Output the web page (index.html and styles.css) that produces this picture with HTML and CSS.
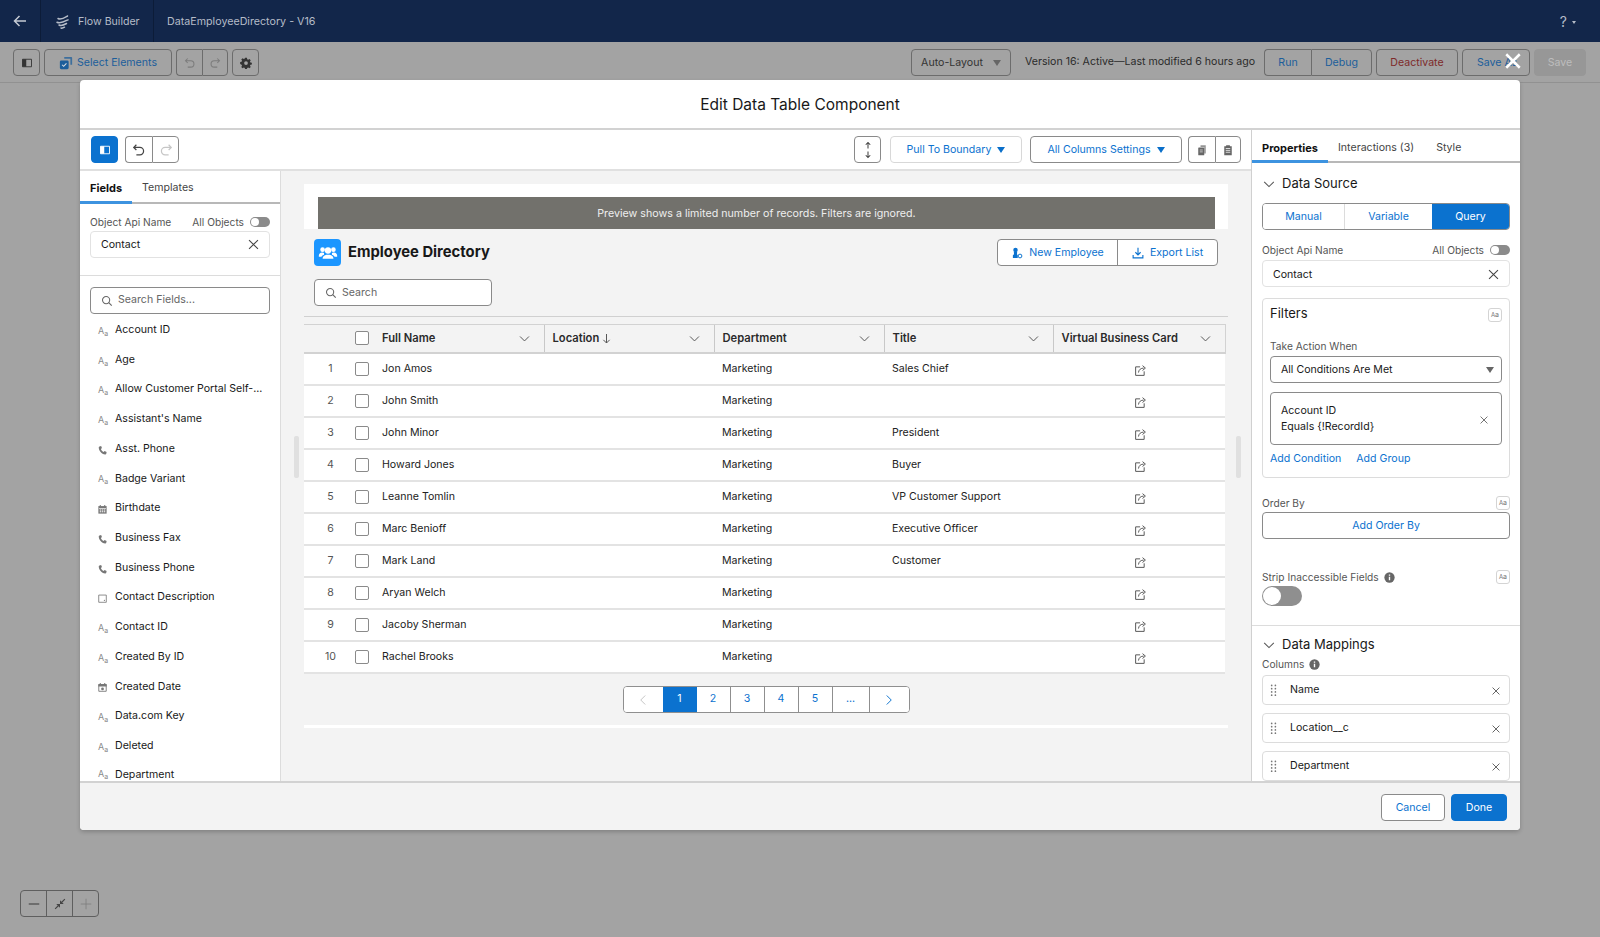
FILE: index.html
```html
<!DOCTYPE html>
<html lang="en">
<head>
<meta charset="utf-8">
<title>Flow Builder</title>
<link rel="stylesheet" href="styles.css">
</head>
<body>
<svg class="sprite" xmlns="http://www.w3.org/2000/svg">
  <symbol id="i-back" viewBox="0 0 16 16"><path d="M14 8H2.500M7.500 3 2.500 8l5 5" fill="none" stroke="currentColor" stroke-width="1.500"/></symbol>
  <symbol id="i-flow" viewBox="0 0 16 16"><path d="M3 4.500c3 1.600 6-.4 9.500-2.500M2 8.200c3.500 1.600 7-.4 11-2.400M4 11c2.500 1.200 5 0 7.500-1.500M6 14c1.200.4 2.200 0 3.500-.8" fill="none" stroke="currentColor" stroke-width="1.500" stroke-linecap="round"/></symbol>
  <symbol id="i-panel" viewBox="0 0 16 16"><path d="M2 3h12v10H2z" fill="none" stroke="currentColor" stroke-width="1.200"/><path d="M2 3h5v10H2z" fill="currentColor"/></symbol>
  <symbol id="i-select" viewBox="0 0 16 16"><path d="M6 1h8a1 1 0 0 1 1 1v8h-2V3H6z" fill="currentColor" opacity=".75"/><rect x="1" y="5" width="10" height="10" rx="1.500" fill="currentColor"/><path d="m3.500 10 1.800 1.800 3.200-3.400" fill="none" stroke="#d6dbe0" stroke-width="1.200"/></symbol>
  <symbol id="i-undo" viewBox="0 0 16 16"><path d="M5 2 2 5l3 3M2.500 5H9a4 4 0 0 1 0 8.500H5" fill="none" stroke="currentColor" stroke-width="1.400"/></symbol>
  <symbol id="i-redo" viewBox="0 0 16 16"><path d="m11 2 3 3-3 3M13.500 5H7a4 4 0 0 0 0 8.500h4" fill="none" stroke="currentColor" stroke-width="1.400"/></symbol>
  <symbol id="i-gear" viewBox="0 0 16 16"><path d="M6.800 1h2.400l.4 1.900 1.300.6 1.700-1 1.700 1.700-1 1.700.6 1.300 1.900.4v2.400l-1.900.4-.6 1.300 1 1.700-1.700 1.700-1.700-1-1.300.6-.4 1.900H6.800l-.4-1.900-1.300-.6-1.700 1-1.700-1.700 1-1.700-.6-1.300L.2 9.200V6.800l1.900-.4.6-1.300-1-1.700 1.700-1.700 1.700 1 1.300-.6z" fill="currentColor"/><circle cx="8" cy="8" r="2.500" fill="#a3a3a3"/></symbol>
  <symbol id="i-chev" viewBox="0 0 16 16"><path d="m2.500 5.500 5.500 5.500 5.500-5.500" fill="none" stroke="currentColor" stroke-width="1.200"/></symbol>
  <symbol id="i-x" viewBox="0 0 16 16"><path d="m2.500 2.500 11 11m0-11-11 11" fill="none" stroke="currentColor" stroke-width="1.300"/></symbol>
  <symbol id="i-close" viewBox="0 0 16 16"><path d="m2 2 12 12m0-12L2 14" fill="none" stroke="currentColor" stroke-width="2.200"/></symbol>
  <symbol id="i-search" viewBox="0 0 16 16"><circle cx="6.800" cy="6.800" r="4.800" fill="none" stroke="currentColor" stroke-width="1.400"/><path d="m10.300 10.300 4 4" stroke="currentColor" stroke-width="1.500"/></symbol>
  <symbol id="i-phone" viewBox="0 0 16 16"><path d="M3.500 2 6 1.500l1.200 3-1.500 1.200c.6 1.800 2 3.400 4 4.500l1.300-1.300 3 1.300-.6 2.800c-.2.500-.8.800-1.500.7C6.500 13 2.800 8.500 2.500 3.500c0-.7.400-1.300 1-1.500z" fill="currentColor"/></symbol>
  <symbol id="i-date" viewBox="0 0 16 16"><path d="M2 3h12v11H2z" fill="currentColor"/><path d="M4 1.500h1.500V4H4zm6.500 0H12V4h-1.500z" fill="currentColor"/><path d="M3 6h10v1H3z" fill="#fff"/><path d="M4 8h2v1.500H4zm3 0h2v1.500H7zm3 0h2v1.500h-2zm-6 2.500h2V12H4zm3 0h2V12H7zm3 0h2V12h-2z" fill="#fff"/></symbol>
  <symbol id="i-datetime" viewBox="0 0 16 16"><path d="M2.600 4h10.800v9.500H2.600z" fill="none" stroke="currentColor" stroke-width="1.300"/><path d="M2 3h12v3.500H2zM4 1.500h1.500V4H4zm6.500 0H12V4h-1.500z" fill="currentColor"/><circle cx="8" cy="10" r="2" fill="currentColor"/></symbol>
  <symbol id="i-area" viewBox="0 0 16 16"><path d="M2.500 3h11v10.500h-11z" fill="none" stroke="currentColor" stroke-width="1.200"/><path d="m9.500 11.500 2-2v2z" fill="currentColor"/></symbol>
  <symbol id="i-share" viewBox="0 0 16 16"><path d="M7.500 3.500H2v10.500h10.500V9" fill="none" stroke="currentColor" stroke-width="1.200"/><path d="M5.500 10.500c.4-3.500 3-5.500 6.500-5.500M10.500 2 14 5l-3.500 3" fill="none" stroke="currentColor" stroke-width="1.200"/></symbol>
  <symbol id="i-group" viewBox="0 0 24 24"><circle cx="12" cy="9" r="3.800" fill="currentColor"/><path d="M5.500 19c0-3.500 2.500-5 6.500-5s6.500 1.500 6.500 5z" fill="currentColor"/><circle cx="5.500" cy="8" r="2.800" fill="currentColor"/><circle cx="18.500" cy="8" r="2.800" fill="currentColor"/><path d="M1 15.500c0-2.500 1.500-4 4-4 1 0 1.800.2 2.400.6-.3 1-.4 1.500 0 2-1.500.5-2.800 1.200-3.200 2.400H1zm22 0c0-2.500-1.500-4-4-4-1 0-1.800.2-2.400.6.300 1 .4 1.500 0 2 1.500.5 2.800 1.200 3.200 2.400H23z" fill="currentColor"/></symbol>
  <symbol id="i-person" viewBox="0 0 16 16"><circle cx="6" cy="4" r="3" fill="currentColor"/><path d="M3.800 6.500h4.400L8 9.500l1 1.500v3.500H2.500V11l1.500-1.500z" fill="currentColor"/><circle cx="12" cy="12" r="2.500" fill="none" stroke="currentColor" stroke-width="1.300"/></symbol>
  <symbol id="i-download" viewBox="0 0 16 16"><path d="M8 1v9M4.500 7 8 10.500 11.500 7" fill="none" stroke="currentColor" stroke-width="1.500"/><path d="M1.500 10.500v4h13v-4" fill="none" stroke="currentColor" stroke-width="1.500"/></symbol>
  <symbol id="i-copy" viewBox="0 0 16 16"><path d="M6 1.500h7v11H11V4H6z" fill="currentColor" opacity=".7"/><rect x="3" y="4.500" width="8" height="10.500" rx=".8" fill="currentColor"/><path d="M5 8h4M5 10.500h4" stroke="#fff" stroke-width=".8"/></symbol>
  <symbol id="i-clip" viewBox="0 0 16 16"><path d="M5.500 1.500h5V3H13v12H3V3h2.500z" fill="currentColor"/><path d="M5 6h6M5 8.500h6M5 11h6" stroke="#fff" stroke-width="1"/></symbol>
  <symbol id="i-height" viewBox="0 0 16 24"><path d="M8 2v8M5 5l3-3 3 3M8 14v8M5 19l3 3 3-3" fill="none" stroke="currentColor" stroke-width="1.400"/></symbol>
  <symbol id="i-info" viewBox="0 0 16 16"><circle cx="8" cy="8" r="7.500" fill="currentColor"/><path d="M7 7h2v5H7zm0-3.500h2v2H7z" fill="#fff"/></symbol>
  <symbol id="i-drag" viewBox="0 0 8 14"><g fill="currentColor"><circle cx="1.500" cy="1.500" r=".9"/><circle cx="5.500" cy="1.500" r=".9"/><circle cx="1.500" cy="5" r=".9"/><circle cx="5.500" cy="5" r=".9"/><circle cx="1.500" cy="8.500" r=".9"/><circle cx="5.500" cy="8.500" r=".9"/><circle cx="1.500" cy="12" r=".9"/><circle cx="5.500" cy="12" r=".9"/></g></symbol>
  <symbol id="i-shrink" viewBox="0 0 16 16"><path d="M1.500 14.500 6 10M14.500 1.500 10 6" stroke="currentColor" stroke-width="1.500"/><path d="M3 8h5v5zM13 8H8V3z" fill="currentColor"/></symbol>
  <symbol id="i-minus" viewBox="0 0 16 16"><path d="M1 8h14" stroke="currentColor" stroke-width="1.500"/></symbol>
  <symbol id="i-plus" viewBox="0 0 16 16"><path d="M1 8h14M8 1v14" stroke="currentColor" stroke-width="1"/></symbol>
  <symbol id="i-arrow" viewBox="0 0 10 12"><path d="M5 1v10M1.500 7.500 5 11l3.500-3.500" fill="none" stroke="currentColor" stroke-width="1.100"/></symbol>
  <symbol id="i-left" viewBox="0 0 16 16"><path d="M11 2 5 8l6 6" fill="none" stroke="currentColor" stroke-width="1.300"/></symbol>
  <symbol id="i-right" viewBox="0 0 16 16"><path d="m5 2 6 6-6 6" fill="none" stroke="currentColor" stroke-width="1.300"/></symbol>
</svg>

<header class="app-header">
  <a class="hd-back"><svg class="ic16"><use href="#i-back"/></svg></a>
  <div class="hd-app"><svg class="ic16"><use href="#i-flow"/></svg><span>Flow Builder</span></div>
  <div class="hd-name">DataEmployeeDirectory - V16</div>
  <div class="hd-help"><span class="hd-q">?</span><span class="hd-caret"></span></div>
</header>

<div class="app-toolbar">
  <button class="tb w27"><svg class="ic12"><use href="#i-panel"/></svg></button>
  <button class="tb tb-select"><svg class="ic14 c-blue"><use href="#i-select"/></svg><span>Select Elements</span></button>
  <div class="tb-group">
    <button class="tb w26 faint"><svg class="ic12"><use href="#i-undo"/></svg></button>
    <button class="tb w26 faint"><svg class="ic12"><use href="#i-redo"/></svg></button>
  </div>
  <button class="tb w27"><svg class="ic12"><use href="#i-gear"/></svg></button>
  <div class="tb-right">
    <button class="tb autolayout"><span>Auto-Layout</span><span class="caret dark"></span></button>
    <span class="version">Version 16: Active—Last modified 6 hours ago</span>
    <div class="tb-group">
      <button class="tb blue w47">Run</button>
      <button class="tb blue w61">Debug</button>
    </div>
    <button class="tb red w82">Deactivate</button>
    <button class="tb blue w68 saveas">Save As</button>
    <button class="tb disabled w52">Save</button>
  </div>
</div>

<div class="canvas"></div>

<div class="zoom-ctl">
  <button><svg class="ic12"><use href="#i-minus"/></svg></button>
  <button><svg class="ic12"><use href="#i-shrink"/></svg></button>
  <button class="faint"><svg class="ic12"><use href="#i-plus"/></svg></button>
</div>

<svg class="modal-close"><use href="#i-close"/></svg>

<section class="modal">
  <h1 class="modal-title">Edit Data Table Component</h1>
  <div class="modal-body">
    <div class="builder">
      <div class="sub-toolbar">
        <button class="sb primary"><svg class="ic12"><use href="#i-panel"/></svg></button>
        <div class="sb-group">
          <button class="sb w27 dark"><svg class="ic14"><use href="#i-undo"/></svg></button>
          <button class="sb w27 off"><svg class="ic14"><use href="#i-redo"/></svg></button>
        </div>
        <div class="sb-right">
          <button class="sb w27 dark height-btn"><svg class="ic-h"><use href="#i-height"/></svg></button>
          <button class="sb link light pull">Pull To Boundary<span class="caret"></span></button>
          <button class="sb link cols">All Columns Settings<span class="caret"></span></button>
          <div class="sb-group">
            <button class="sb w27 grey"><svg class="ic12"><use href="#i-copy"/></svg></button>
            <button class="sb w26 grey"><svg class="ic12"><use href="#i-clip"/></svg></button>
          </div>
        </div>
      </div>
      <div class="builder-main">
        <aside class="fields">
          <div class="tabs left-tabs">
            <span class="tab active">Fields</span>
            <span class="tab">Templates</span>
          </div>
          <div class="obj">
            <div class="label-row"><span>Object Api Name</span><span class="all-obj">All Objects<i class="mini-toggle"></i></span></div>
            <div class="input light-input"><span>Contact</span><svg class="ic13 c-dark"><use href="#i-x"/></svg></div>
          </div>
          <div class="field-search">
            <svg class="ic12"><use href="#i-search"/></svg><span>Search Fields...</span>
          </div>
          <ul class="field-list">
            <li><span class="ft">A<sub>a</sub></span>Account ID</li>
            <li><span class="ft">A<sub>a</sub></span>Age</li>
            <li><span class="ft">A<sub>a</sub></span>Allow Customer Portal Self-...</li>
            <li><span class="ft">A<sub>a</sub></span>Assistant's Name</li>
            <li><span class="ft"><svg class="ic9"><use href="#i-phone"/></svg></span>Asst. Phone</li>
            <li><span class="ft">A<sub>a</sub></span>Badge Variant</li>
            <li><span class="ft"><svg class="ic9"><use href="#i-date"/></svg></span>Birthdate</li>
            <li><span class="ft"><svg class="ic9"><use href="#i-phone"/></svg></span>Business Fax</li>
            <li><span class="ft"><svg class="ic9"><use href="#i-phone"/></svg></span>Business Phone</li>
            <li><span class="ft"><svg class="ic9"><use href="#i-area"/></svg></span>Contact Description</li>
            <li><span class="ft">A<sub>a</sub></span>Contact ID</li>
            <li><span class="ft">A<sub>a</sub></span>Created By ID</li>
            <li><span class="ft"><svg class="ic9"><use href="#i-datetime"/></svg></span>Created Date</li>
            <li><span class="ft">A<sub>a</sub></span>Data.com Key</li>
            <li><span class="ft">A<sub>a</sub></span>Deleted</li>
            <li><span class="ft">A<sub>a</sub></span>Department</li>
          </ul>
        </aside>
        <main class="preview">
          <i class="handle handle-l"></i>
          <i class="handle handle-r"></i>
          <div class="banner-wrap"><div class="banner">Preview shows a limited number of records. Filters are ignored.</div></div>
          <div class="dir-head">
            <span class="dir-icon"><svg><use href="#i-group"/></svg></span>
            <h2>Employee Directory</h2>
            <div class="dir-actions">
              <button><svg class="ic12"><use href="#i-person"/></svg>New Employee</button>
              <button><svg class="ic12"><use href="#i-download"/></svg>Export List</button>
            </div>
          </div>
          <div class="dir-search"><svg class="ic12"><use href="#i-search"/></svg><span>Search</span></div>
          <div class="dir-rule"></div>
          <table class="grid">
            <colgroup><col class="c-n"><col class="c-c"><col class="c-name"><col class="c-w"><col class="c-w"><col class="c-t"><col class="c-l"></colgroup>
            <thead>
              <tr>
                <th></th>
                <th class="th-cb"><i class="cb"></i></th>
                <th class="first"><div class="th"><span>Full Name</span><svg class="ic-c"><use href="#i-chev"/></svg></div></th>
                <th class="sep"><div class="th"><span>Location <svg class="ic-a"><use href="#i-arrow"/></svg></span><svg class="ic-c"><use href="#i-chev"/></svg></div></th>
                <th class="sep"><div class="th"><span>Department</span><svg class="ic-c"><use href="#i-chev"/></svg></div></th>
                <th class="sep"><div class="th"><span>Title</span><svg class="ic-c"><use href="#i-chev"/></svg></div></th>
                <th class="sep"><div class="th"><span>Virtual Business Card</span><svg class="ic-c"><use href="#i-chev"/></svg></div></th>
              </tr>
            </thead>
            <tbody>
              <tr><td class="n">1</td><td><i class="cb"></i></td><td>Jon Amos</td><td></td><td>Marketing</td><td>Sales Chief</td><td class="act"><svg class="ic13"><use href="#i-share"/></svg></td></tr>
              <tr><td class="n">2</td><td><i class="cb"></i></td><td>John Smith</td><td></td><td>Marketing</td><td></td><td class="act"><svg class="ic13"><use href="#i-share"/></svg></td></tr>
              <tr><td class="n">3</td><td><i class="cb"></i></td><td>John Minor</td><td></td><td>Marketing</td><td>President</td><td class="act"><svg class="ic13"><use href="#i-share"/></svg></td></tr>
              <tr><td class="n">4</td><td><i class="cb"></i></td><td>Howard Jones</td><td></td><td>Marketing</td><td>Buyer</td><td class="act"><svg class="ic13"><use href="#i-share"/></svg></td></tr>
              <tr><td class="n">5</td><td><i class="cb"></i></td><td>Leanne Tomlin</td><td></td><td>Marketing</td><td>VP Customer Support</td><td class="act"><svg class="ic13"><use href="#i-share"/></svg></td></tr>
              <tr><td class="n">6</td><td><i class="cb"></i></td><td>Marc Benioff</td><td></td><td>Marketing</td><td>Executive Officer</td><td class="act"><svg class="ic13"><use href="#i-share"/></svg></td></tr>
              <tr><td class="n">7</td><td><i class="cb"></i></td><td>Mark Land</td><td></td><td>Marketing</td><td>Customer</td><td class="act"><svg class="ic13"><use href="#i-share"/></svg></td></tr>
              <tr><td class="n">8</td><td><i class="cb"></i></td><td>Aryan Welch</td><td></td><td>Marketing</td><td></td><td class="act"><svg class="ic13"><use href="#i-share"/></svg></td></tr>
              <tr><td class="n">9</td><td><i class="cb"></i></td><td>Jacoby Sherman</td><td></td><td>Marketing</td><td></td><td class="act"><svg class="ic13"><use href="#i-share"/></svg></td></tr>
              <tr><td class="n">10</td><td><i class="cb"></i></td><td>Rachel Brooks</td><td></td><td>Marketing</td><td></td><td class="act"><svg class="ic13"><use href="#i-share"/></svg></td></tr>
            </tbody>
          </table>
          <nav class="pager">
            <button class="p-prev"><svg class="ic12"><use href="#i-left"/></svg></button>
            <button class="p-on">1</button>
            <button class="p-n">2</button>
            <button class="p-n">3</button>
            <button class="p-n">4</button>
            <button class="p-n">5</button>
            <button class="p-more">...</button>
            <button class="p-next"><svg class="ic12"><use href="#i-right"/></svg></button>
          </nav>
          <div class="white-bar"></div>
        </main>
      </div>
    </div>
    <aside class="props">
      <div class="tabs right-tabs">
        <span class="tab active">Properties</span>
        <span class="tab">Interactions (3)</span>
        <span class="tab">Style</span>
      </div>
      <div class="props-body">
        <div class="sec-head"><svg class="ic-sec"><use href="#i-chev"/></svg>Data Source</div>
        <div class="segs">
          <button class="s1">Manual</button>
          <button class="s2">Variable</button>
          <button class="s3">Query</button>
        </div>
        <div class="label-row mt14"><span>Object Api Name</span><span class="all-obj">All Objects<i class="mini-toggle"></i></span></div>
        <div class="input light-input"><span>Contact</span><svg class="ic13 c-dark"><use href="#i-x"/></svg></div>
        <div class="filters">
          <div class="filters-head"><span>Filters</span><span class="fx">A<sub>a</sub></span></div>
          <div class="flabel">Take Action When</div>
          <div class="select"><span>All Conditions Are Met</span><span class="caret dark"></span></div>
          <div class="cond">
            <div><div>Account ID</div><div class="cond-2">Equals {!RecordId}</div></div>
            <svg class="ic10"><use href="#i-x"/></svg>
          </div>
          <div class="links"><a>Add Condition</a><a>Add Group</a></div>
        </div>
        <div class="label-row order-lab"><span>Order By</span><span class="fx">A<sub>a</sub></span></div>
        <button class="order-btn">Add Order By</button>
        <div class="label-row strip-lab"><span class="with-info">Strip Inaccessible Fields<svg class="ic11"><use href="#i-info"/></svg></span><span class="fx">A<sub>a</sub></span></div>
        <i class="big-toggle"></i>
        <div class="props-rule"></div>
        <div class="sec-head"><svg class="ic-sec"><use href="#i-chev"/></svg>Data Mappings</div>
        <div class="with-info col-lab">Columns<svg class="ic11"><use href="#i-info"/></svg></div>
        <div class="map"><svg class="ic-drag"><use href="#i-drag"/></svg><span>Name</span><svg class="ic10 c-dark"><use href="#i-x"/></svg></div>
        <div class="map"><svg class="ic-drag"><use href="#i-drag"/></svg><span>Location__c</span><svg class="ic10 c-dark"><use href="#i-x"/></svg></div>
        <div class="map"><svg class="ic-drag"><use href="#i-drag"/></svg><span>Department</span><svg class="ic10 c-dark"><use href="#i-x"/></svg></div>
      </div>
    </aside>
  </div>
  <footer class="modal-foot">
    <button class="cancel">Cancel</button>
    <button class="done">Done</button>
  </footer>
</section>
</body>
</html>
```

FILE: styles.css
```css
* { box-sizing: border-box; }
html, body { height: 100%; }
body {
  margin: 0;
  height: 937px;
  overflow: hidden;
  display: flex;
  flex-direction: column;
  background: #a3a3a3;
  color: #181818;
  font: 10.6px/1.2 Inter, "Liberation Sans", sans-serif;
  position: relative;
}
button { font: inherit; cursor: default; }
h1, h2, ul { margin: 0; padding: 0; }
i { display: block; font-style: normal; }
svg { display: block; flex: none; }
.sprite { position: absolute; width: 0; height: 0; }
.ic16 { width: 16px; height: 16px; }
.ic14 { width: 14px; height: 14px; }
.ic13 { width: 13px; height: 13px; }
.ic12 { width: 12px; height: 12px; }
.ic11 { width: 11px; height: 11px; }
.ic10 { width: 10px; height: 10px; }
.ic9 { width: 11px; height: 11px; }
.c-blue { color: #1c5e9b; }
.c-dark { color: #444; }

.caret { display: inline-block; width: 0; height: 0; border: 4.500px solid transparent; border-top: 6px solid #0a6fca; border-bottom: 0; margin-left: 6px; }
.caret.dark { border-top-color: #666; }

/* app header */
.app-header { height: 42px; flex: none; display: flex; align-items: stretch; background: #12264a; color: #b5bcc8; padding-top: 2px; }
.hd-back { width: 41px; margin-top: -2px; display: flex; align-items: center; justify-content: center; border-right: 1px solid #0c1c38; color: #c5cad3; padding-right: 1px; }
.hd-app { width: 113px; margin-top: -2px; padding-top: 2px; display: flex; align-items: center; gap: 7px; padding-left: 14px; border-right: 1px solid #0c1c38; }
.hd-name { padding-left: 13px; display: flex; align-items: center; font-size: 10.700px; }
.hd-help { margin-left: auto; margin-right: 24px; display: flex; align-items: center; gap: 5px; }
.hd-q { font-size: 14px; }
.hd-caret { width: 0; height: 0; border: 2.500px solid transparent; border-top: 3px solid #b5bcc8; border-bottom: 0; }

/* app toolbar */
.app-toolbar { height: 41px; flex: none; display: flex; align-items: flex-start; padding: 7px 14px 0 13px; gap: 4px; border-bottom: 1px solid #919191; color: #3a3a3a; }
.tb { height: 27px; padding: 1px 0 0; background: transparent; border: 1px solid #6c6c6c; border-radius: 4px; display: flex; align-items: center; justify-content: center; color: #333; }
.tb-group { display: flex; }
.tb-group .tb:first-child { border-radius: 4px 0 0 4px; border-right: 0; }
.tb-group .tb:last-child { border-radius: 0 4px 4px 0; }
.w26 { width: 26px; }
.w27 { width: 27px; }
.w47 { width: 47px; }
.w61 { width: 61px; }
.w82 { width: 82px; }
.w68 { width: 68px; }
.w52 { width: 52px; }
.tb-select { width: 128px; gap: 4px; color: #1c5e9b; }
.faint { color: #7c7c7c !important; }
.tb.blue { color: #1c5e9b; }
.tb.red { color: #7e2a2a; }
.tb.disabled { background: #979797; border-color: #979797; color: #bdbdbd; }
.tb-right { margin-left: auto; display: flex; gap: 4px; align-items: center; }
.tb.autolayout { width: 100px; gap: 10px; margin-right: 10px; }
.tb.autolayout .caret { margin-left: 0; }
.version { width: 235px; color: #2b2b2b; white-space: nowrap; }
.saveas { justify-content: flex-start; padding-left: 14px; }
.canvas { flex: 1; }

.modal-close { position: absolute; left: 1504px; top: 52px; width: 18px; height: 18px; color: #fff; }

.zoom-ctl { position: absolute; left: 20px; top: 890px; display: flex; height: 27px; border: 1px solid #5f5f5f; border-radius: 4px; }
.zoom-ctl button { width: 26px; background: transparent; border: 0; border-right: 1px solid #5f5f5f; padding: 0; display: flex; align-items: center; justify-content: center; color: #444; }
.zoom-ctl button:last-child { border-right: 0; width: 25px; }

/* modal */
.modal { position: absolute; left: 80px; top: 80px; width: 1440px; height: 750px; background: #fff; border-radius: 4px; box-shadow: 0 2px 4px rgba(0,0,0,.2); display: flex; flex-direction: column; overflow: hidden; }
.modal-title { height: 50px; flex: none; border-bottom: 2px solid #d2d2d2; font-size: 15.500px; font-weight: 400; line-height: 49px; text-align: center; color: #181818; }
.modal-body { height: 653px; flex: none; display: flex; overflow: hidden; border-bottom: 2px solid #d2d2d2; }
.builder { width: 1171px; flex: none; display: flex; flex-direction: column; }
.sub-toolbar { height: 41px; flex: none; display: flex; align-items: flex-start; padding: 6px 10px 0 11px; gap: 7px; border-bottom: 2px solid #e0e0e0; }
.sb { height: 27px; padding: 1px 0 0; background: #fff; border: 1px solid #8a8a8a; border-radius: 4px; display: flex; align-items: center; justify-content: center; }
.sb.primary { width: 27px; background: #0b72cf; border-color: #0b72cf; color: #fff; }
.sb.dark { color: #444; }
.sb.off { color: #c6c6c6; }
.sb.grey { color: #666; }
.sb.link { color: #0b72cf; padding-top: 2px; }
.sb.link .caret { margin-top: -1px; }
.sb.light { border-color: #d8d8d8; }
.sb-group { display: flex; }
.sb-group .sb:first-child { border-radius: 4px 0 0 4px; border-right: 0; }
.sb-group .sb:last-child { border-radius: 0 4px 4px 0; }
.sb-right { margin-left: auto; display: flex; gap: 6px; }
.height-btn { margin-right: 3px; }
.sb.pull { width: 132px; margin-right: 2px; }
.sb.cols { width: 152px; }
.ic-h { width: 12px; height: 20px; }
.builder-main { flex: 1; min-height: 0; display: flex; }

/* tabs */
.tabs { display: flex; flex: none; height: 33px; border-bottom: 2px solid #b8b8b8; padding-top: 11px; align-items: stretch; }
.tab { color: #444; position: relative; }
.tab.active { color: #111; font-weight: 700; font-size: 11px; }
.tab.active::after { content: ""; position: absolute; bottom: -2px; height: 3px; background: #3d93e0; }
.left-tabs { padding-left: 10px; gap: 20px; }
.left-tabs .tab.active::after { left: -10px; right: -10px; }
.right-tabs { padding-left: 10px; padding-top: 12px; gap: 20px; }
.right-tabs .tab.active::after { left: -10px; right: -10px; }
.right-tabs .tab:last-child { margin-left: 2px; }

/* left fields */
.fields { width: 201px; flex: none; border-right: 1px solid #dcdcdc; display: flex; flex-direction: column; overflow: hidden; }
.obj { flex: none; padding: 12px 10px 17px; border-bottom: 1px solid #dcdcdc; }
.label-row { display: flex; align-items: center; justify-content: space-between; color: #555; height: 12px; font-size: 10.200px; }
.all-obj { display: flex; align-items: center; gap: 6px; }
.mini-toggle { width: 20px; height: 10px; border-radius: 5px; background: #8b8b8b; position: relative; }
.mini-toggle::before { content: ""; position: absolute; left: 1px; top: 1px; width: 8px; height: 8px; border-radius: 50%; background: #fff; }
.input { margin-top: 3px; height: 27px; display: flex; align-items: center; justify-content: space-between; padding: 2px 9px 0 10px; border-radius: 4px; color: #181818; }
.input svg { margin-top: -2px; }
.light-input { border: 1px solid #e2e2e2; }
.props-body .input { margin-top: 4px; padding-top: 3px; }
.field-search { margin: 11px 10px 0; height: 27px; flex: none; border: 1px solid #8a8a8a; border-radius: 4px; display: flex; align-items: center; gap: 5px; padding-left: 10px; color: #666; }
.field-list { list-style: none; margin-top: 1.500px; flex: none; }
.field-list li { height: 29.730px; display: flex; align-items: center; padding-left: 18px; white-space: nowrap; color: #181818; }
.field-list li:last-child { height: 21px; align-items: flex-start; padding-top: 8px; }
.ft { width: 17px; flex: none; font-size: 9px; color: #8a8a8a; display: block; line-height: 1; }
.ft .ic9 { color: #777; margin: 2px 0 0 -1px; }
.ft sub, .fx sub { font-size: 7px; vertical-align: -2px; line-height: 0; }

/* center */
.preview { flex: 1; min-width: 0; background: #f3f3f3; padding: 13px 23px 0; position: relative; }
.handle { position: absolute; width: 5px; height: 42px; top: 265px; background: #e0e0e0; border-radius: 2px; }
.handle-l { left: 13px; }
.handle-r { left: 955px; }
.banner-wrap { height: 45px; background: #fff; padding: 13px 13px 0 14px; }
.banner { height: 32px; background: #72716c; color: #eee; display: flex; align-items: center; justify-content: center; padding: 2px 20px 0 0; font-size: 10.700px; }
.dir-head { margin-top: 10px; height: 27px; padding: 0 10px; display: flex; align-items: center; gap: 7px; }
.dir-icon { width: 27px; height: 27px; background: #1b96ff; border-radius: 4px; color: #fff; display: flex; align-items: center; justify-content: center; }
.dir-icon svg { width: 20px; height: 20px; }
.dir-head h2 { font-size: 14.800px; font-weight: 700; padding-top: 1px; }
.dir-actions { margin-left: auto; display: flex; height: 27px; background: #fff; border: 1px solid #8a8a8a; border-radius: 4px; width: 221px; }
.dir-actions button { background: transparent; border: 0; color: #0b72cf; padding: 1px 0 0; display: flex; align-items: center; justify-content: center; gap: 6px; flex: 1; white-space: nowrap; }
.dir-actions button:first-child { flex: none; width: 120px; border-right: 1px solid #8a8a8a; }
.dir-search { margin: 13px 0 0 10px; width: 178px; height: 27px; background: #fff; border: 1px solid #8a8a8a; border-radius: 4px; display: flex; align-items: center; gap: 5px; padding: 2px 0 0 10px; color: #666; }
.dir-search svg { margin-top: -2px; }
.dir-rule { margin-top: 10px; border-top: 1px solid #d0d0d0; }

.grid { margin-top: 7px; width: 921px; table-layout: fixed; border-collapse: collapse; }
.c-n { width: 44px; }
.c-c { width: 30px; }
.c-name { width: 166px; }
.c-w { width: 170px; }
.c-t { width: 169px; }
.c-l { width: 172px; }
.grid th { height: 28px; padding: 1px 0 0; border-top: 1px solid #d2d2d2; border-bottom: 2px solid #d2d2d2; text-align: left; font-weight: 600; font-size: 11.200px; color: #2a2a2a; }
.grid th.th-cb { padding: 0 0 0 7px; }
.grid th:last-child { border-right: 1px solid #d2d2d2; }
.grid th.sep { border-left: 1px solid #c8c8c8; }
.th { display: flex; align-items: center; justify-content: space-between; padding: 0 13px 0 8px; }
.first .th { padding-left: 4px; }
.th span { display: inline-flex; align-items: center; gap: 3px; }
.ic-c { width: 13px; height: 13px; color: #555; }
.ic-a { width: 9px; height: 11px; color: #555; }
.grid td { height: 32px; padding: 1px 0 0 8px; background: #fff; border-bottom: 2px solid #e3e3e3; color: #222; }
.grid td:nth-child(2) { padding: 0 0 0 7px; }
.grid td:nth-child(3) { padding-left: 4px; }
.grid td.n { padding: 1px 0 0 9px; text-align: center; color: #555; }
.cb { width: 14px; height: 14px; background: #fff; border: 1px solid #8a8a8a; border-radius: 2px; }
.grid td.act svg { margin: 3px 0 0 73px; color: #555; }

.pager { margin: 12px auto 0; width: 287px; height: 27px; display: flex; background: #fff; border: 1px solid #8f8f8f; border-radius: 4px; overflow: hidden; }
.pager button { border: 0; border-right: 1px solid #8f8f8f; background: #fff; padding: 1px 0 0; color: #0b72cf; display: flex; align-items: center; justify-content: center; }
.pager button:last-child { border-right: 0; }
.p-prev { width: 39px; color: #c4c4c4 !important; border-right: 0 !important; }
.p-on { width: 34px; background: #0b72cf !important; color: #fff !important; border-right: 0 !important; }
.p-n { width: 34px; }
.p-more { width: 37px; }
.p-next { flex: 1; color: #0b72cf; }
.white-bar { margin-top: 12px; height: 3px; background: #fff; }

/* right props */
.props { flex: 1; min-width: 0; border-left: 1px solid #d0d0d0; display: flex; flex-direction: column; overflow: hidden; }
.props-body { padding: 11px 10px 0 10px; }
.sec-head { display: flex; align-items: center; gap: 6px; font-size: 13px; height: 20px; color: #181818; }
.ic-sec { width: 14px; height: 14px; color: #555; }
.segs { margin-top: 9px; height: 27px; display: flex; border: 1px solid #8a8a8a; border-radius: 4px; overflow: hidden; }
.segs button { border: 0; background: #fff; color: #0b72cf; padding: 2px 0 0; }
.s1 { width: 82px; border-right: 1px solid #dcdcdc !important; }
.s2 { width: 87px; }
.s3 { flex: 1; background: #0b72cf !important; color: #fff !important; }
.mt14 { margin-top: 14px; }
.filters { margin-top: 11px; height: 180px; border: 1px solid #dcdcdc; border-radius: 4px; padding: 0 7px; }
.filters-head { height: 29px; display: flex; align-items: center; justify-content: space-between; font-size: 13px; }
.fx { width: 14px; height: 14px; border: 1px solid #d4d4d4; border-radius: 3px; font-size: 6px; color: #777; display: flex; align-items: center; justify-content: center; background: #fff; font-weight: 400; }
.filters-head .fx { margin-top: 3px; }
.flabel { margin-top: 12px; color: #555; font-size: 10.200px; height: 12px; line-height: 12px; }
.select { margin-top: 4px; height: 27px; border: 1px solid #8a8a8a; border-radius: 4px; display: flex; align-items: center; justify-content: space-between; padding: 1px 7px 0 10px; }
.cond { margin-top: 9px; height: 53px; border: 1px solid #8a8a8a; border-radius: 4px; display: flex; align-items: center; justify-content: space-between; padding: 2px 12px 0 10px; }
.cond-2 { margin-top: 3px; }
.cond svg { color: #555; }
.links { margin-top: 8px; display: flex; gap: 15px; color: #0b72cf; }
.order-lab { margin-top: 19px; }
.order-btn { display: block; margin-top: 3px; width: 100%; height: 27px; background: #fff; border: 1px solid #8a8a8a; border-radius: 4px; color: #0b72cf; padding: 2px 0 0; }
.strip-lab { margin-top: 32px; }
.with-info { display: flex; align-items: center; gap: 5px; color: #555; font-size: 10.200px; }
.with-info svg { color: #666; }
.big-toggle { margin-top: 3px; width: 40px; height: 20px; border-radius: 10px; background: #8f8f8f; position: relative; }
.big-toggle::before { content: ""; position: absolute; left: 1px; top: 1px; width: 18px; height: 18px; border-radius: 50%; background: #fff; }
.props-rule { margin: 19px -10px 9px; border-top: 1px solid #dcdcdc; }
.col-lab { margin-top: 3px; height: 12px; }
.map { margin-top: 5px; height: 30px; border: 1px solid #dcdcdc; border-radius: 4px; display: flex; align-items: center; padding: 1px 8px 0 7px; }
.map + .map { margin-top: 8px; }
.map span { flex: 1; padding-left: 12px; }
.ic-drag { width: 8px; height: 13px; color: #777; }

.modal-foot { flex: 1; background: #f3f3f3; display: flex; justify-content: flex-end; align-items: flex-start; padding: 11px 13px 0 0; gap: 6px; }
.modal-foot button { height: 27px; border-radius: 4px; padding: 1px 0 0; }
.cancel { width: 64px; background: #fff; border: 1px solid #8a8a8a; color: #0b72cf; }
.done { width: 56px; background: #0b72cf; border: 1px solid #0b72cf; color: #fff; }
```
